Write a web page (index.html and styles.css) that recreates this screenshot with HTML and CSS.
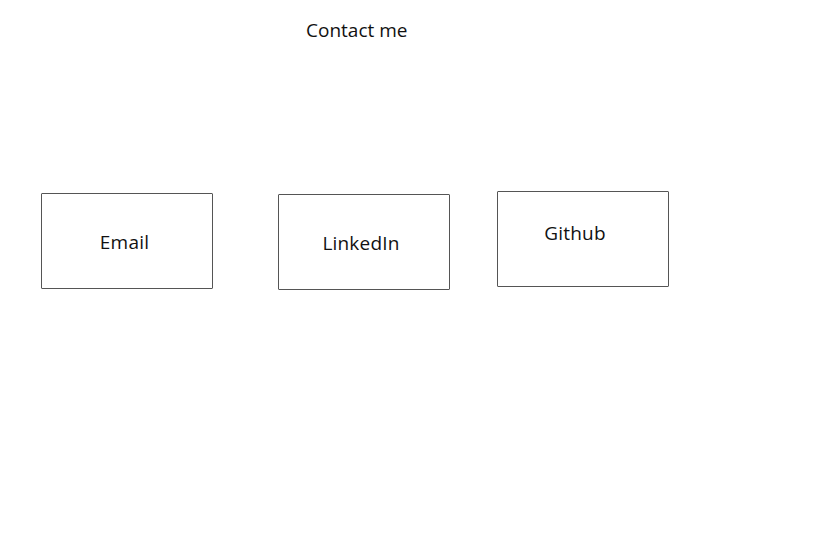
FILE: index.html
```html
<!DOCTYPE html>
<html lang="en">
<head>
  <meta charset="UTF-8" />
  <title>Contact me</title>
  <link rel="stylesheet" href="styles.css">
</head>
<body>
  <h1 class="title">Contact me</h1>

  <div class="links">
    <div class="link-box email"><span>Email</span></div>
    <div class="link-box linkedin"><span>LinkedIn</span></div>
    <div class="link-box github"><span>Github</span></div>
  </div>
</body>
</html>
```

FILE: styles.css
```css
body {
  margin: 0;
  background: #fff;
  color: #111;
  font-family: "Open Sans", Lato, sans-serif;
}

.title {
  margin: 0;
  padding: 19px 0 0 306px;
  font-size: 19px;
  font-weight: normal;
  line-height: 22px;
}

.links {
  display: flex;
  align-items: flex-start;
  padding-left: 41px;
  margin-top: 150px;
}

.link-box {
  box-sizing: border-box;
  width: 172px;
  height: 96px;
  border: 1px solid #555;
  border-radius: 1px;
  display: flex;
  align-items: center;
  justify-content: center;
  font-size: 19px;
  letter-spacing: 0.2px;
}

.email {
  margin-top: 2px;
  padding: 2px 5px 0 0;
}

.linkedin {
  margin-left: 65px;
  margin-top: 3px;
  padding: 2px 6px 0 0;
}

.github {
  margin-left: 47px;
  padding: 0 16px 12px 0;
}
```
